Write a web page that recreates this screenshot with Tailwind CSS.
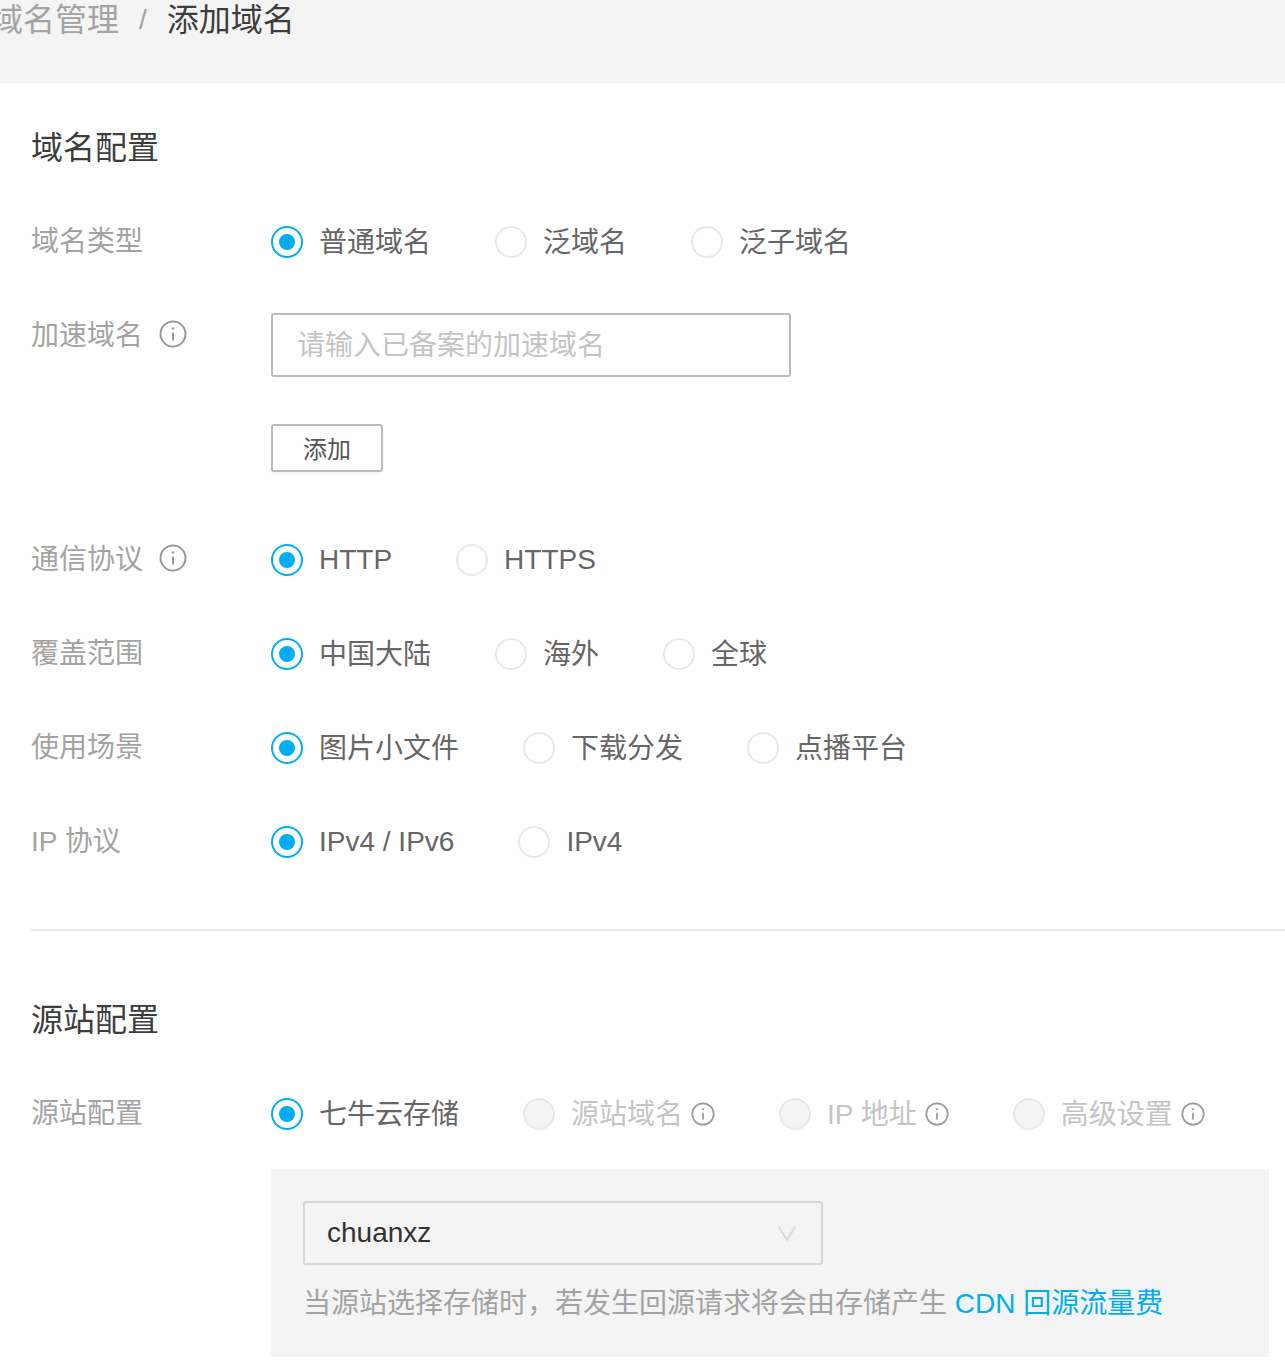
<!doctype html>
<html lang="zh-CN">
<head>
<meta charset="utf-8">
<script src="https://cdn.jsdelivr.net/npm/@tailwindcss/browser@4"></script>
</head>
<body class="bg-white overflow-hidden font-['Liberation_Sans','Noto_Sans_CJK_SC',sans-serif]">
<div class="h-[1371px] w-[1285px] overflow-hidden">
  <header class="h-[83px] bg-[#f4f4f4] overflow-hidden flex items-start pt-[2px] pl-0 text-[32px] leading-[36px]">
    <span class="ml-[-9px] text-[#a3a3a3] whitespace-nowrap">域名管理</span>
    <span class="ml-[20px] text-[28px] text-[#a3a3a3]">/</span>
    <span class="ml-[20px] text-[#3d3d3d] whitespace-nowrap">添加域名</span>
  </header>

  <main class="pl-[31px]">
    <h2 class="pt-[47px] text-[32px] leading-[36px] text-[#3d3d3d]">域名配置</h2>

    <div class="mt-[60px] flex items-start h-[32px]">
      <div class="w-[240px] text-[28px] leading-[28px] text-[#a3a3a3] mt-[2px]">域名类型</div>
      <div class="flex gap-[64px] text-[28px] leading-[34px] text-[#666666]">
        <label class="flex gap-[16px] whitespace-nowrap"><span class="w-[32px] h-[32px] rounded-full border-2 border-[#00aeef] flex items-center justify-center"><span class="w-[16px] h-[16px] rounded-full bg-[#00aeef]"></span></span>普通域名</label>
        <label class="flex gap-[16px] whitespace-nowrap"><span class="w-[32px] h-[32px] rounded-full border-2 border-[#e8e8e8]"></span>泛域名</label>
        <label class="flex gap-[16px] whitespace-nowrap"><span class="w-[32px] h-[32px] rounded-full border-2 border-[#e8e8e8]"></span>泛子域名</label>
      </div>
    </div>

    <div class="mt-[55px] flex items-start">
      <div class="w-[240px] h-[28px] flex items-center gap-[16px] text-[28px] leading-[28px] text-[#a3a3a3] mt-[7px]"><span class="pt-[4px]">加速域名</span>
        <svg class="w-[28px] h-[28px]" viewBox="0 0 28 28" fill="none" stroke="#999999" stroke-width="2"><circle cx="14" cy="14" r="12.5"/><path d="M14 12.5v8" stroke-width="2"/><circle cx="14" cy="8.5" r="1.3" fill="#999999" stroke="none"/></svg>
      </div>
      <div>
        <div class="w-[520px] h-[64px] rounded-[3px] border-2 border-[#bbbbbb] pl-[24px] text-[28px] leading-[62px] text-[#c4c4c4] whitespace-nowrap">请输入已备案的加速域名</div>
        <button class="mt-[47px] block w-[112px] h-[48px] rounded-[3px] border-2 border-[#bbbbbb] text-[24px] leading-[48px] text-[#555555] shadow-[0_2px_3px_rgba(0,0,0,0.05)]">添加</button>
      </div>
    </div>

    <div class="mt-[72px] flex items-start h-[32px]">
      <div class="w-[240px] h-[28px] flex items-center gap-[16px] text-[28px] leading-[28px] text-[#a3a3a3]"><span class="pt-[4px]">通信协议</span>
        <svg class="w-[28px] h-[28px]" viewBox="0 0 28 28" fill="none" stroke="#999999" stroke-width="2"><circle cx="14" cy="14" r="12.5"/><path d="M14 12.5v8"/><circle cx="14" cy="8.5" r="1.3" fill="#999999" stroke="none"/></svg>
      </div>
      <div class="flex gap-[64px] text-[28px] leading-[31px] text-[#666666]">
        <label class="flex gap-[16px] whitespace-nowrap"><span class="w-[32px] h-[32px] rounded-full border-2 border-[#00aeef] flex items-center justify-center"><span class="w-[16px] h-[16px] rounded-full bg-[#00aeef]"></span></span>HTTP</label>
        <label class="flex gap-[16px] whitespace-nowrap"><span class="w-[32px] h-[32px] rounded-full border-2 border-[#e8e8e8]"></span>HTTPS</label>
      </div>
    </div>

    <div class="mt-[62px] flex items-start h-[32px]">
      <div class="w-[240px] text-[28px] leading-[28px] text-[#a3a3a3] mt-[2px]">覆盖范围</div>
      <div class="flex gap-[64px] text-[28px] leading-[34px] text-[#666666]">
        <label class="flex gap-[16px] whitespace-nowrap"><span class="w-[32px] h-[32px] rounded-full border-2 border-[#00aeef] flex items-center justify-center"><span class="w-[16px] h-[16px] rounded-full bg-[#00aeef]"></span></span>中国大陆</label>
        <label class="flex gap-[16px] whitespace-nowrap"><span class="w-[32px] h-[32px] rounded-full border-2 border-[#e8e8e8]"></span>海外</label>
        <label class="flex gap-[16px] whitespace-nowrap"><span class="w-[32px] h-[32px] rounded-full border-2 border-[#e8e8e8]"></span>全球</label>
      </div>
    </div>

    <div class="mt-[62px] flex items-start h-[32px]">
      <div class="w-[240px] text-[28px] leading-[28px] text-[#a3a3a3] mt-[2px]">使用场景</div>
      <div class="flex gap-[64px] text-[28px] leading-[34px] text-[#666666]">
        <label class="flex gap-[16px] whitespace-nowrap"><span class="w-[32px] h-[32px] rounded-full border-2 border-[#00aeef] flex items-center justify-center"><span class="w-[16px] h-[16px] rounded-full bg-[#00aeef]"></span></span>图片小文件</label>
        <label class="flex gap-[16px] whitespace-nowrap"><span class="w-[32px] h-[32px] rounded-full border-2 border-[#e8e8e8]"></span>下载分发</label>
        <label class="flex gap-[16px] whitespace-nowrap"><span class="w-[32px] h-[32px] rounded-full border-2 border-[#e8e8e8]"></span>点播平台</label>
      </div>
    </div>

    <div class="mt-[62px] flex items-start h-[32px]">
      <div class="w-[240px] text-[28px] leading-[28px] text-[#a3a3a3] mt-[2px]">IP 协议</div>
      <div class="flex gap-[64px] text-[28px] leading-[31px] text-[#666666]">
        <label class="flex gap-[16px] whitespace-nowrap"><span class="w-[32px] h-[32px] rounded-full border-2 border-[#00aeef] flex items-center justify-center"><span class="w-[16px] h-[16px] rounded-full bg-[#00aeef]"></span></span>IPv4 / IPv6</label>
        <label class="flex gap-[16px] whitespace-nowrap"><span class="w-[32px] h-[32px] rounded-full border-2 border-[#e8e8e8]"></span>IPv4</label>
      </div>
    </div>

    <hr class="mt-[71px] border-0 border-t-2 border-[#e8e8e8]">

    <h2 class="mt-[71px] text-[32px] leading-[36px] text-[#3d3d3d]">源站配置</h2>

    <div class="mt-[60px] flex items-start h-[32px]">
      <div class="w-[240px] text-[28px] leading-[28px] text-[#a3a3a3] mt-[2px]">源站配置</div>
      <div class="flex gap-[64px] text-[28px] leading-[34px] text-[#666666]">
        <label class="flex gap-[16px] whitespace-nowrap"><span class="w-[32px] h-[32px] rounded-full border-2 border-[#00aeef] flex items-center justify-center"><span class="w-[16px] h-[16px] rounded-full bg-[#00aeef]"></span></span>七牛云存储</label>
        <label class="flex gap-[16px] whitespace-nowrap text-[#c4c4c4]"><span class="w-[32px] h-[32px] rounded-full border-2 border-[#e8e8e8] bg-[#f4f4f4]"></span><span class="flex items-start gap-[8px]">源站域名<svg class="w-[24px] h-[24px] mt-[4px]" viewBox="0 0 28 28" fill="none" stroke="#999999" stroke-width="2"><circle cx="14" cy="14" r="12.5"/><path d="M14 12.5v8"/><circle cx="14" cy="8.5" r="1.3" fill="#999999" stroke="none"/></svg></span></label>
        <label class="flex gap-[16px] whitespace-nowrap text-[#c4c4c4]"><span class="w-[32px] h-[32px] rounded-full border-2 border-[#e8e8e8] bg-[#f4f4f4]"></span><span class="flex items-start gap-[8px]">IP 地址<svg class="w-[24px] h-[24px] mt-[4px]" viewBox="0 0 28 28" fill="none" stroke="#999999" stroke-width="2"><circle cx="14" cy="14" r="12.5"/><path d="M14 12.5v8"/><circle cx="14" cy="8.5" r="1.3" fill="#999999" stroke="none"/></svg></span></label>
        <label class="flex gap-[16px] whitespace-nowrap text-[#c4c4c4]"><span class="w-[32px] h-[32px] rounded-full border-2 border-[#e8e8e8] bg-[#f4f4f4]"></span><span class="flex items-start gap-[8px]">高级设置<svg class="w-[24px] h-[24px] mt-[4px]" viewBox="0 0 28 28" fill="none" stroke="#999999" stroke-width="2"><circle cx="14" cy="14" r="12.5"/><path d="M14 12.5v8"/><circle cx="14" cy="8.5" r="1.3" fill="#999999" stroke="none"/></svg></span></label>
      </div>
    </div>

    <div class="mt-[39px] ml-[240px] w-[998px] h-[188px] bg-[#f4f4f4] pt-[32px] pl-[32px]">
      <div class="w-[520px] h-[64px] rounded-[3px] border-2 border-[#d6d6d6] pl-[22px] pr-[24px] flex items-center justify-between text-[28px] text-[#333333]">
        <span>chuanxz</span>
        <svg class="w-[20px] h-[16px]" viewBox="0 0 20 16" fill="none" stroke="#d6d6d6" stroke-width="1.6"><path d="M1.5 1.5 L10 15 L18.5 1.5"/></svg>
      </div>
      <p class="mt-[21px] text-[28px] leading-[36px] text-[#a3a3a3] whitespace-nowrap">当源站选择存储时，若发生回源请求将会由存储产生 <span class="text-[#00aeef]">CDN 回源流量费</span></p>
    </div>
  </main>
</div>
</body>
</html>
